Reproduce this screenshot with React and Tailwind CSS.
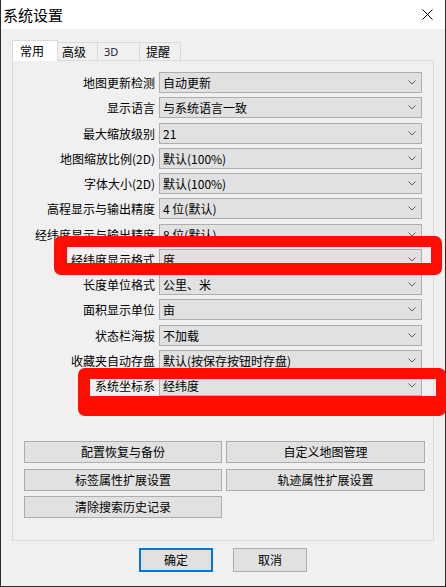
import React from "react";

const rows = [
  ["地图更新检测", "自动更新"],
  ["显示语言", "与系统语言一致"],
  ["最大缩放级别", "21"],
  ["地图缩放比例(2D)", "默认(100%)"],
  ["字体大小(2D)", "默认(100%)"],
  ["高程显示与输出精度", "4 位(默认)"],
  ["经纬度显示与输出精度", "8 位(默认)"],
  ["经纬度显示格式", "度"],
  ["长度单位格式", "公里、米"],
  ["面积显示单位", "亩"],
  ["状态栏海拔", "不加载"],
  ["收藏夹自动存盘", "默认(按保存按钮时存盘)"],
  ["系统坐标系", "经纬度"],
];

function Chevron() {
  return (
    <svg width="8" height="5" viewBox="0 0 8 5" className="shrink-0">
      <path d="M0.5 0.5 L4 4 L7.5 0.5" fill="none" stroke="#606060" strokeWidth="1" />
    </svg>
  );
}

function Row({ label, value }) {
  return (
    <div className="flex h-[21px] items-center">
      <div className="w-[142px] text-right leading-[21px] whitespace-nowrap">{label}</div>
      <div className="ml-[4px] flex h-[21px] w-[263px] items-center justify-between border border-[#adadad] bg-[#e1e1e1] pl-[3px] pr-[5px] leading-[19px]">
        <span className="whitespace-nowrap">{value}</span>
        <Chevron />
      </div>
    </div>
  );
}

function Btn({ children }) {
  return (
    <div className="flex h-[22px] items-center justify-center border border-[#adadad] bg-[#e1e1e1] leading-[20px]">
      {children}
    </div>
  );
}

export default function App() {
  return (
    <div className="relative flex h-[587px] w-[446px] flex-col border-x border-b border-[#2b2b2b] bg-[#f0f0f0] font-['Noto_Sans_CJK_SC',sans-serif] text-[12px] text-black">
      {/* title bar */}
      <div className="flex h-[29px] shrink-0 items-center justify-between bg-white pl-[2px] pr-[12px]">
        <span className="text-[15px] leading-[20px]">系统设置</span>
        <svg width="11" height="11" viewBox="0 0 11 11">
          <path d="M0.5 0.5 L10.5 10.5 M10.5 0.5 L0.5 10.5" stroke="#000" strokeWidth="1" />
        </svg>
      </div>

      {/* body */}
      <div className="flex flex-col pt-[11px]">
        {/* tabs */}
        <div className="ml-[11px] flex h-[20px] items-end">
          <div className="relative z-10 -mb-px h-[21px] w-[46px] border-x border-t border-[#d9d9d9] bg-white pl-[7px] leading-[19px]">
            常用
          </div>
          <div className="h-[18px] w-[40px] border-r border-t border-[#d9d9d9] pl-[4px] leading-[18px]">高级</div>
          <div className="h-[18px] w-[42px] border-r border-t border-[#d9d9d9] pl-[6px] font-['Noto_Sans',sans-serif] text-[11px] leading-[18px] text-[#202040]">
            3D
          </div>
          <div className="h-[18px] w-[41px] border-r border-t border-[#d9d9d9] pl-[6px] leading-[18px]">提醒</div>
        </div>

        {/* panel */}
        <div className="ml-[11px] flex h-[481px] w-[422px] flex-col border border-[#d9d9d9] bg-[#f0f0f0] pt-[11px]">
          <div className="flex flex-col gap-[4.25px]">
            {rows.map(([l, v]) => (
              <Row key={l} label={l} value={v} />
            ))}
          </div>

          <div className="ml-[11px] mt-[45px] grid grid-cols-[198px_199px] gap-x-[4px] gap-y-[5.5px]">
            <Btn>配置恢复与备份</Btn>
            <Btn>自定义地图管理</Btn>
            <Btn>标签属性扩展设置</Btn>
            <Btn>轨迹属性扩展设置</Btn>
            <Btn>清除搜索历史记录</Btn>
          </div>
        </div>

        {/* ok / cancel */}
        <div className="mt-[7px] flex justify-center gap-[20px]">
          <div className="flex h-[24px] w-[74px] items-center justify-center border-2 border-[#0078d7] bg-[#e1e1e1] leading-[20px]">
            确定
          </div>
          <div className="flex h-[24px] w-[74px] items-center justify-center border border-[#adadad] bg-[#e1e1e1] leading-[22px]">
            取消
          </div>
        </div>
      </div>

      {/* red annotation boxes */}
      <div className="pointer-events-none absolute left-[53px] top-[236px] h-[39px] w-[388px] rounded-[7px] border-b-[12px] border-l-[13px] border-r-[11px] border-t-[11px] border-[#ff0d00]" />
      <div className="pointer-events-none absolute left-[77px] top-[368px] h-[48px] w-[368px] rounded-[7px] border-b-[20px] border-l-[12px] border-r-[10px] border-t-[11px] border-[#ff0d00]" />
    </div>
  );
}
